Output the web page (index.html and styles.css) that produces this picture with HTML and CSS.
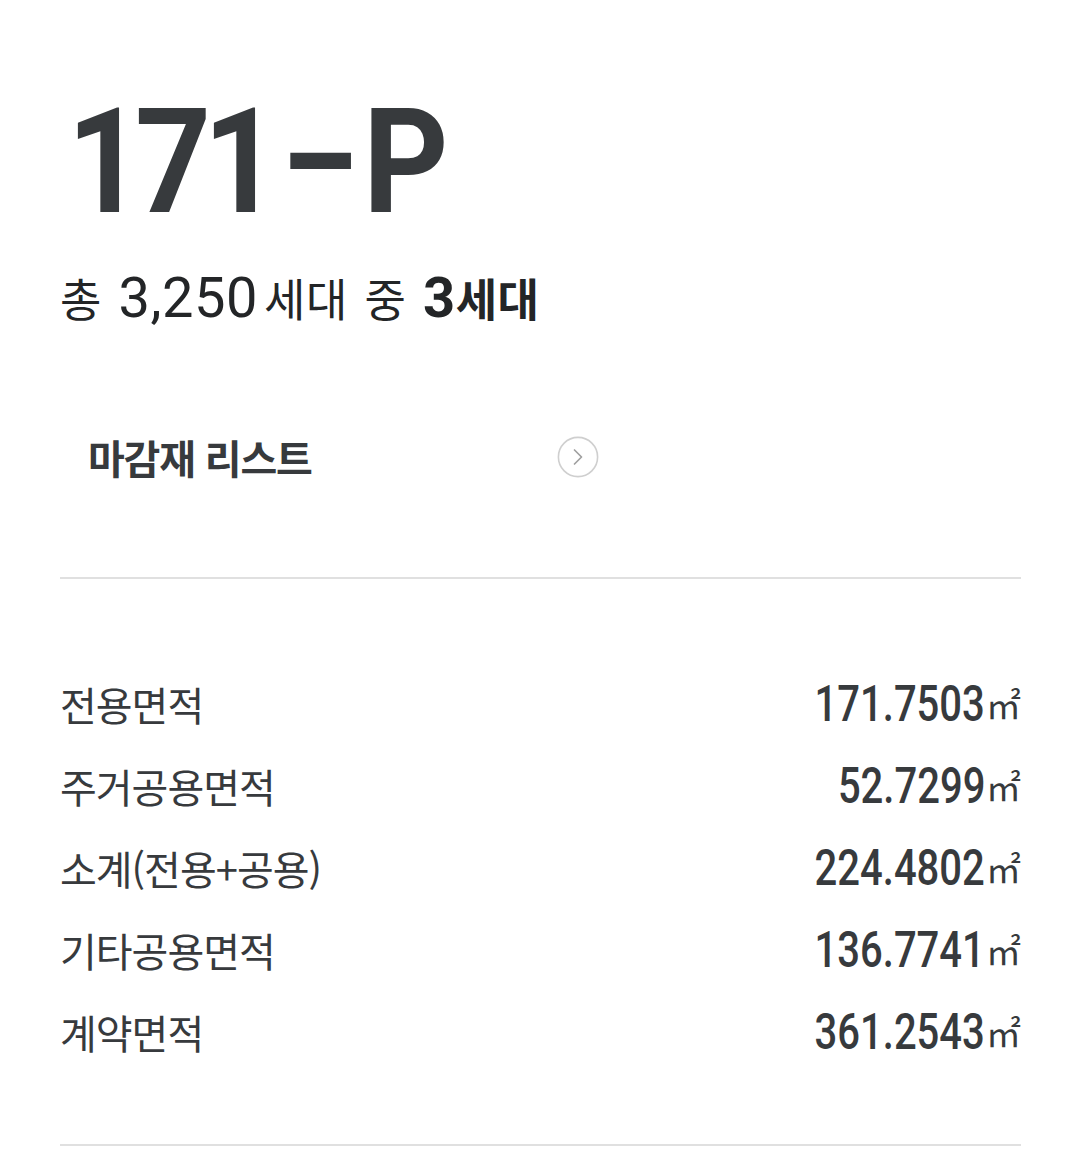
FILE: index.html
```html
<!DOCTYPE html>
<html lang="ko">
<head>
<meta charset="utf-8">
<link rel="stylesheet" href="styles.css">
</head>
<body>
<div class="page">
  <h1 class="title"><span class="title-text">171<span class="dash">–</span>P</span></h1>
  <p class="count">총 <span class="n first">3,250</span>세대 중 <b><span class="n">3</span>세대</b></p>
  <div class="finish">
    <span class="finish-label">마감재 리스트</span>
    <svg class="arrow" width="42" height="42" viewBox="0 0 42 42">
      <circle cx="21" cy="21" r="19.6" fill="none" stroke="#cfcfcf" stroke-width="1.6"/>
      <path d="M17.5 14 L24.5 21 L17.5 28" fill="none" stroke="#a0a0a0" stroke-width="1.7" stroke-linecap="round" stroke-linejoin="round"/>
    </svg>
  </div>
  <hr class="rule">
  <ul class="areas">
    <li><span class="label">전용면적</span><span class="val"><span class="num">171.7503</span><span class="unit">㎡</span></span></li>
    <li><span class="label">주거공용면적</span><span class="val"><span class="num">52.7299</span><span class="unit">㎡</span></span></li>
    <li><span class="label">소계(전용+공용)</span><span class="val"><span class="num">224.4802</span><span class="unit">㎡</span></span></li>
    <li><span class="label">기타공용면적</span><span class="val"><span class="num">136.7741</span><span class="unit">㎡</span></span></li>
    <li><span class="label">계약면적</span><span class="val"><span class="num">361.2543</span><span class="unit">㎡</span></span></li>
  </ul>
  <hr class="rule bottom">
</div>
</body>
</html>
```
FILE: styles.css
```css
html, body { margin: 0; padding: 0; background: #fff; }
body { font-family: "Noto Sans CJK KR", "Noto Sans", sans-serif; color: #373a3d; }
.page { padding: 0 59px 0 60px; }
.title {
  margin: 0;
  padding: 90px 0 0 7px;
  font-family: Roboto, "Noto Sans", sans-serif;
  font-weight: 700;
  font-size: 146px;
  line-height: 146px;
  letter-spacing: -9px;
  color: #373a3d;
}
.title-text {
  display: inline-block;
  transform: scaleX(0.91);
  transform-origin: left center;
}
.dash {
  display: inline-block;
  margin-left: 7px;
  letter-spacing: 2px;
  transform: scaleX(0.9);
}
.count {
  margin: 34px 0 0;
  height: 64px;
  font-family: Roboto, "Noto Sans CJK KR", sans-serif;
  font-size: 45px;
  line-height: 64px;
  font-weight: 400;
  letter-spacing: 0.5px;
  word-spacing: 5px;
  color: #232527;
}
.count .n { font-size: 56px; line-height: 40px; }
.count .first { margin-right: 6px; }
.count b { font-weight: 700; }
.finish {
  box-sizing: border-box;
  display: flex;
  align-items: center;
  justify-content: space-between;
  width: 539px;
  height: 60px;
  margin-top: 93px;
  padding-left: 28px;
}
.finish-label { font-size: 40px; font-weight: 700; line-height: 60px; color: #373a3d; letter-spacing: -1.2px; }
.arrow { display: block; }
.rule { margin: 90px 0 0; border: 0; height: 2px; background: #e0e0e0; }
.areas { list-style: none; margin: 0; padding: 84px 0 0; }
.areas li { display: flex; justify-content: space-between; align-items: center; height: 82px; }
.label { font-size: 40px; font-weight: 400; color: #373a3d; letter-spacing: -1px; }
.val { display: flex; align-items: center; }
.num {
  display: inline-block;
  font-family: Roboto, sans-serif;
  font-weight: 500;
  font-size: 50px;
  line-height: 60px;
  color: #373a3d;
  transform: scaleX(0.8);
  transform-origin: right center;
}
.unit { font-size: 35px; font-weight: 400; line-height: 60px; margin-left: 1px; color: #373a3d; }
.bottom { margin-top: 71px; }
```
